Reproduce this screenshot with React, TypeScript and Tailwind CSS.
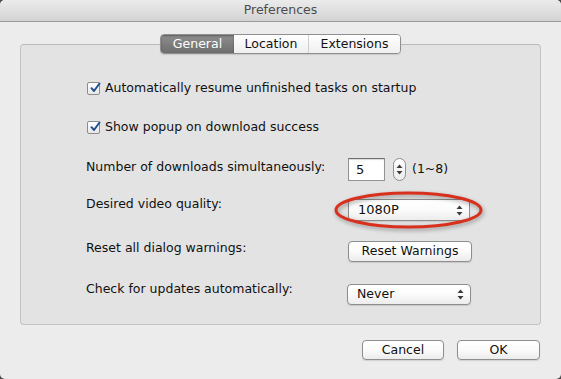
import React from 'react'

function CheckBox() {
  return (
    <span className="w-[13px] h-[13px] shrink-0 rounded-[2px] border border-[#8c8c8c] bg-gradient-to-b from-white to-[#e8e8e8] flex items-center justify-center relative">
      <svg width="13" height="13" viewBox="0 0 13 13" className="absolute -top-[2px] left-[1px]">
        <path d="M2.5 7.2 L5 10 L10.5 2.5" fill="none" stroke="#23508f" strokeWidth="2" strokeLinecap="round" strokeLinejoin="round" />
      </svg>
    </span>
  )
}

function Arrows() {
  return (
    <svg width="7" height="11" viewBox="0 0 7 11">
      <path d="M3.5 0.5 L6.5 4 L0.5 4 Z" fill="#3c3c3c" />
      <path d="M3.5 10.5 L6.5 7 L0.5 7 Z" fill="#3c3c3c" />
    </svg>
  )
}

const btn =
  'rounded-[4px] border border-[#8e8e8e] bg-gradient-to-b from-white via-[#fbfbfb] to-[#ececec] shadow-[0_1px_1px_rgba(0,0,0,0.12)] flex items-center text-[12.5px] text-[#111]'

export default function App() {
  return (
    <div className="w-[561px] h-[379px] bg-[#4a4a4a] font-['DejaVu_Sans',sans-serif] text-[#111] text-[12.5px]">
      <div className="w-full h-full rounded-[5px] overflow-hidden bg-[#ececec] flex flex-col">
        {/* Title bar */}
        <div className="h-[22px] shrink-0 border-b border-[#9a9a9a] bg-gradient-to-b from-[#ebebeb] to-[#d3d3d3] flex items-center justify-center text-[12.5px] text-[#4d4d4d]">
          Preferences
        </div>

        <div className="flex flex-col px-[20px] pt-[12px]">
          {/* Tabs */}
          <div className="flex justify-center relative z-10 -mb-[10px]">
            <div className="flex h-[20px] rounded-[4px] border border-[#8f8f8f] overflow-hidden shadow-[0_1px_1px_rgba(0,0,0,0.12)]">
              <div className="w-[73px] flex items-center justify-center text-white bg-gradient-to-b from-[#8e8e8e] to-[#6e6e6e] shadow-[inset_0_1px_2px_rgba(0,0,0,0.35)]">
                General
              </div>
              <div className="w-[75px] flex items-center justify-center bg-gradient-to-b from-white to-[#efefef] border-r border-[#cfcfcf]">
                Location
              </div>
              <div className="w-[91px] flex items-center justify-center bg-gradient-to-b from-white to-[#efefef]">
                Extensions
              </div>
            </div>
          </div>

          {/* Group box */}
          <div className="h-[281px] rounded-[4px] border border-[#c3c3c3] border-t-[#b9b9b9] bg-[#e3e3e3] pl-[66px] pt-[33px] flex flex-col">
            <div className="h-[20px] flex items-center">
              <CheckBox />
              <span className="ml-[5px]">Automatically resume unfinished tasks on startup</span>
            </div>
            <div className="h-[20px] mt-[19px] flex items-center">
              <CheckBox />
              <span className="ml-[5px]">Show popup on download success</span>
            </div>

            <div className="h-[23px] mt-[21px] flex items-center">
              <span className="w-[262px] -ml-[1px] pb-[5px]">Number of downloads simultaneously:</span>
              <div className="w-[37px] h-[23px] bg-white border border-[#939393] border-t-[#6f6f6f] shadow-[inset_0_1px_1px_rgba(0,0,0,0.15)] flex items-center pl-[7px] text-[13px]">
                5
              </div>
              <div className="ml-[8px] w-[13px] h-[23px] rounded-full border border-[#8e8e8e] bg-gradient-to-b from-white to-[#ececec] flex items-center justify-center">
                <Arrows />
              </div>
              <span className="ml-[6px]">(1~8)</span>
            </div>

            <div className="h-[22px] mt-[18px] flex items-center">
              <span className="w-[262px] -ml-[1px] pb-[12px]">Desired video quality:</span>
              <div className="relative">
                <div className={`${btn} w-[122px] h-[22px] pl-[9px] pr-[6px] justify-between text-[13px]`}>
                  <span>1080P</span>
                  <Arrows />
                </div>
                <svg
                  width="151"
                  height="40"
                  viewBox="0 0 151 40"
                  className="absolute -left-[15px] -top-[9px] drop-shadow-[1px_2px_2px_rgba(0,0,0,0.35)] pointer-events-none"
                >
                  <ellipse cx="75.5" cy="20" rx="72.5" ry="17" fill="none" stroke="#d9301d" strokeWidth="3" />
                </svg>
              </div>
            </div>

            <div className="h-[21px] mt-[20px] flex items-center">
              <span className="w-[262px] -ml-[1px] pb-[7px]">Reset all dialog warnings:</span>
              <div className={`${btn} w-[124px] h-[21px] justify-center`}>Reset Warnings</div>
            </div>

            <div className="h-[21px] mt-[22px] flex items-center">
              <span className="w-[261px] -ml-[1px] pb-[10px]">Check for updates automatically:</span>
              <div className={`${btn} w-[124px] h-[21px] pl-[9px] pr-[6px] justify-between`}>
                <span>Never</span>
                <Arrows />
              </div>
            </div>
          </div>

          {/* Footer buttons */}
          <div className="flex justify-end gap-[13px] mt-[15px] pr-[1px]">
            <div className={`${btn} w-[82px] h-[20px] justify-center`}>Cancel</div>
            <div className={`${btn} w-[83px] h-[20px] justify-center`}>OK</div>
          </div>
        </div>
      </div>
    </div>
  )
}
